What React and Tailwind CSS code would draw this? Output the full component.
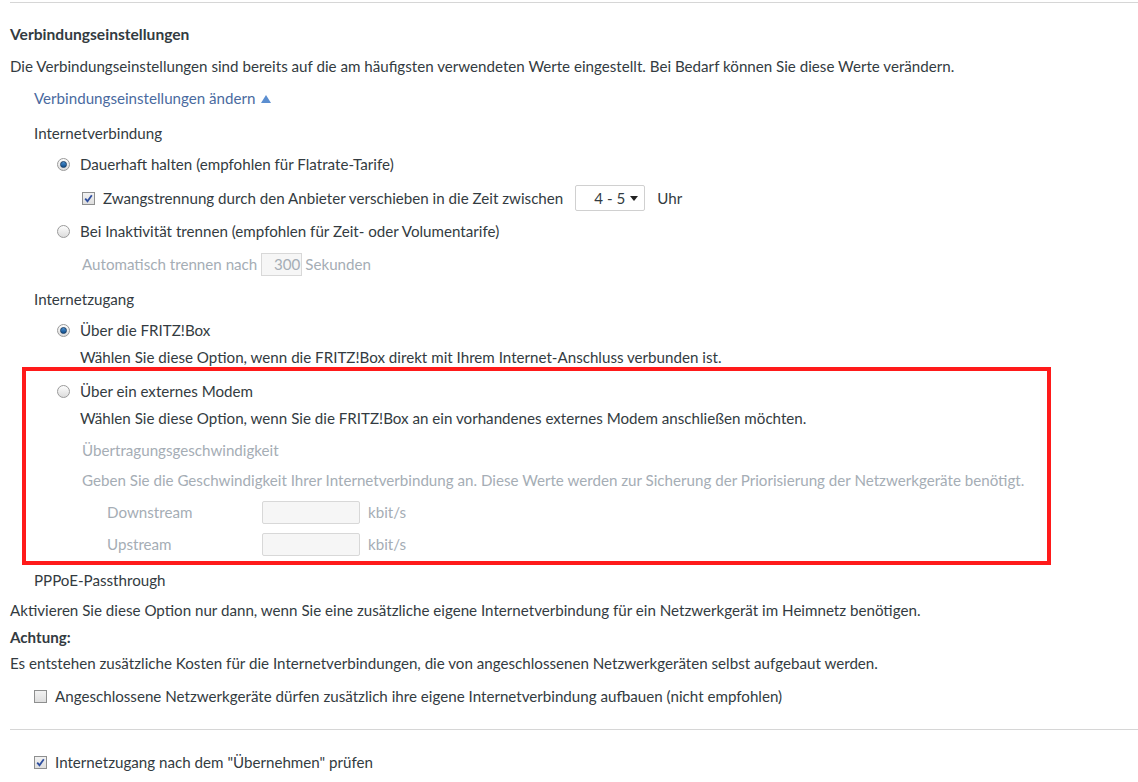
const dark = 'text-[#333b41]'

function Radio({ checked }) {
  return (
    <span className="w-[13px] h-[13px] rounded-full border border-[#9a9a9a] bg-gradient-to-b from-[#fdfdfd] to-[#dcdcdc] flex items-center justify-center shrink-0">
      {checked && <span className="w-[7px] h-[7px] rounded-full bg-gradient-to-b from-[#4a90d0] to-[#0d4f8f] border border-[#1b3f66]" />}
    </span>
  )
}

function Check({ checked }) {
  return (
    <span className="w-[13px] h-[13px] border border-[#8e8f8f] bg-gradient-to-b from-[#f2f2f2] to-[#dedede] flex items-center justify-center shrink-0">
      {checked && (
        <svg width="9" height="9" viewBox="0 0 9 9">
          <path d="M1.2 4.6 L3.5 7.2 L7.8 1.3" fill="none" stroke="#2f4f9f" strokeWidth="1.8" />
        </svg>
      )}
    </span>
  )
}

export default function App() {
  return (
    <div
      className={`relative w-[1138px] h-[782px] overflow-hidden bg-white text-[15.15px] leading-5 ${dark}`}
      style={{ fontFamily: 'Lato, "Open Sans", sans-serif' }}
    >
      <div className="mt-[2px] ml-[10px] border-t border-[#d6d6d6]" />

      <div className="mt-[21px] ml-[10px] h-5 flex items-center font-bold text-[15.6px]">Verbindungseinstellungen</div>
      <div className="mt-[12px] ml-[10px] h-5 flex items-center">
        Die Verbindungseinstellungen sind bereits auf die am häufigsten verwendeten Werte eingestellt. Bei Bedarf können Sie diese Werte verändern.
      </div>
      <div className="mt-[12px] ml-[34px] h-5 flex items-center gap-[5px] text-[#4a6aa0]">
        Verbindungseinstellungen ändern
        <svg width="10" height="8" viewBox="0 0 10 8" className="mt-[1px]">
          <path d="M5 0 L10 8 L0 8 Z" fill="#5b8ed0" />
        </svg>
      </div>

      <div className="mt-[15px] ml-[34px] h-5 flex items-center">Internetverbindung</div>
      <div className="mt-[11px] ml-[57px] h-5 flex items-center gap-[10px]">
        <Radio checked />
        <span>Dauerhaft halten (empfohlen für Flatrate-Tarife)</span>
      </div>
      <div className="mt-[14px] ml-[82px] h-5 flex items-center">
        <Check checked />
        <span className="ml-[8px]">Zwangstrennung durch den Anbieter verschieben in die Zeit zwischen</span>
        <span className="ml-[12px] w-[70px] h-[26px] border border-[#d0d0d0] rounded-[2px] flex items-center justify-end pr-[6px] gap-[5px]">
          <span>4 - 5</span>
          <svg width="8" height="5" viewBox="0 0 8 5">
            <path d="M0 0 L8 0 L4 5 Z" fill="#222" />
          </svg>
        </span>
        <span className="ml-[12px]">Uhr</span>
      </div>
      <div className="mt-[13px] ml-[57px] h-5 flex items-center gap-[10px]">
        <Radio />
        <span>Bei Inaktivität trennen (empfohlen für Zeit- oder Volumentarife)</span>
      </div>
      <div className="mt-[13px] ml-[82px] h-5 flex items-center text-[#a5adb5]">
        <span>Automatisch trennen nach</span>
        <span className="ml-[4px] w-[41px] h-[23px] border border-[#d8d8d8] bg-[#f6f6f6] flex items-center justify-end pr-[1px]">300</span>
        <span className="ml-[3px]">Sekunden</span>
      </div>

      <div className="mt-[15px] ml-[34px] h-5 flex items-center">Internetzugang</div>
      <div className="mt-[11px] ml-[57px] h-5 flex items-center gap-[10px]">
        <Radio checked />
        <span>Über die FRITZ!Box</span>
      </div>
      <div className="mt-[7px] ml-[80px] h-5 flex items-center">
        Wählen Sie diese Option, wenn die FRITZ!Box direkt mit Ihrem Internet-Anschluss verbunden ist.
      </div>
      <div className="mt-[14px] ml-[57px] h-5 flex items-center gap-[10px]">
        <Radio />
        <span>Über ein externes Modem</span>
      </div>
      <div className="mt-[7px] ml-[80px] h-5 flex items-center">
        Wählen Sie diese Option, wenn Sie die FRITZ!Box an ein vorhandenes externes Modem anschließen möchten.
      </div>
      <div className="mt-[12px] ml-[82px] h-5 flex items-center text-[#a5adb5]">Übertragungsgeschwindigkeit</div>
      <div className="mt-[10px] ml-[82px] h-5 flex items-center text-[#a5adb5]">
        Geben Sie die Geschwindigkeit Ihrer Internetverbindung an. Diese Werte werden zur Sicherung der Priorisierung der Netzwerkgeräte benötigt.
      </div>
      <div className="mt-[12px] ml-[107px] h-5 flex items-center text-[#a5adb5]">
        <span className="w-[155px]">Downstream</span>
        <span className="w-[98px] h-[23px] border border-[#d8d8d8] bg-[#f6f6f6] rounded-[2px]" />
        <span className="ml-[8px]">kbit/s</span>
      </div>
      <div className="mt-[12px] ml-[107px] h-5 flex items-center text-[#a5adb5]">
        <span className="w-[155px]">Upstream</span>
        <span className="w-[98px] h-[23px] border border-[#d8d8d8] bg-[#f6f6f6] rounded-[2px]" />
        <span className="ml-[8px]">kbit/s</span>
      </div>

      <div className="mt-[16px] ml-[34px] h-5 flex items-center">PPPoE-Passthrough</div>
      <div className="mt-[10px] ml-[10px] h-5 flex items-center">
        Aktivieren Sie diese Option nur dann, wenn Sie eine zusätzliche eigene Internetverbindung für ein Netzwerkgerät im Heimnetz benötigen.
      </div>
      <div className="mt-[7px] ml-[10px] h-5 flex items-center font-bold">Achtung:</div>
      <div className="mt-[6px] ml-[10px] h-5 flex items-center">
        Es entstehen zusätzliche Kosten für die Internetverbindungen, die von angeschlossenen Netzwerkgeräten selbst aufgebaut werden.
      </div>
      <div className="mt-[13px] ml-[34px] h-5 flex items-center gap-[8px]">
        <Check />
        <span>Angeschlossene Netzwerkgeräte dürfen zusätzlich ihre eigene Internetverbindung aufbauen (nicht empfohlen)</span>
      </div>

      <div className="mt-[23px] ml-[10px] border-t border-[#d6d6d6]" />
      <div className="mt-[22px] ml-[34px] h-5 flex items-center gap-[8px]">
        <Check checked />
        <span>Internetzugang nach dem "Übernehmen" prüfen</span>
      </div>

      <div className="absolute left-[22px] top-[367px] w-[1029px] h-[198px] border-[4px] border-[#ff1a1a] pointer-events-none" />
    </div>
  )
}
